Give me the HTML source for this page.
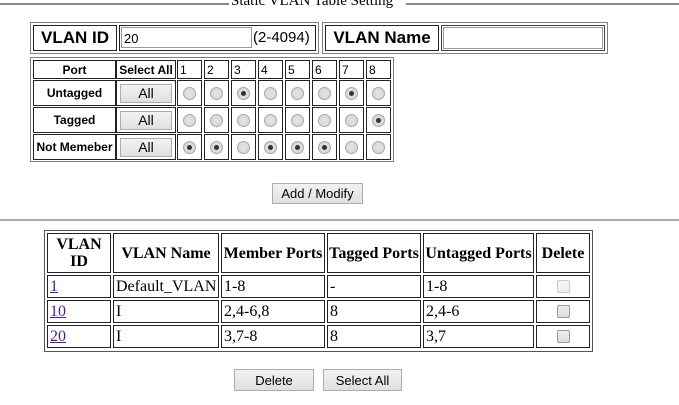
<!DOCTYPE html>
<html><head><meta charset="utf-8"><style>
body{margin:0;width:679px;height:405px;background:#fff;position:relative;overflow:hidden;font-family:"Liberation Sans",sans-serif;}
.a{position:absolute;box-sizing:border-box;}
.o{border:1px solid #808080;}
.c{border:1px solid #222;display:flex;align-items:center;justify-content:center;font-size:12px;}
.l{justify-content:flex-start;padding-left:2px;}
.b{font-weight:bold;}
.r{width:13px;height:13px;border-radius:50%;border:1px solid #a8a8a8;background:radial-gradient(circle,#e4e4e4,#d4d4d4);box-sizing:border-box;position:relative;}
.r.on::after{content:"";position:absolute;left:3px;top:3px;width:5px;height:5px;border-radius:50%;background:#333;}
.btn{border:1px solid #adadad;background:linear-gradient(#f2f2f2,#e0e0e0);display:flex;align-items:center;justify-content:center;font-size:13px;color:#000;}
.s{font-family:"Liberation Serif",serif;font-size:15px;}
.cb{width:13px;height:13px;border:1px solid #999;border-radius:2px;background:linear-gradient(#eee,#ddd);box-sizing:border-box;}
a{color:#551a8b;}
</style></head><body>
<div class="a" style="left:0;top:3px;width:229px;height:0;border-top:2px solid #888"></div>
<div class="a s" style="left:231px;top:-6px;font-size:15px;white-space:nowrap;line-height:15px">Static VLAN Table Setting</div>
<div class="a" style="left:406px;top:3px;width:273px;height:0;border-top:2px solid #888"></div>

<div class="a o" style="left:30px;top:22px;width:289px;height:32px"></div>
<div class="a c b" style="left:33px;top:25px;width:84px;height:26px;font-size:17px">VLAN ID</div>
<div class="a c" style="left:119px;top:25px;width:197px;height:26px;justify-content:flex-start"></div>
<div class="a" style="left:121px;top:27px;width:131px;height:21px;border:1px solid #999;font-size:13px;padding:3px 0 0 2px;box-sizing:border-box">20</div>
<div class="a" style="left:253px;top:29px;font-size:15px">(2-4094)</div>

<div class="a o" style="left:322px;top:22px;width:286px;height:32px"></div>
<div class="a c b" style="left:325px;top:25px;width:114px;height:26px;font-size:17px">VLAN Name</div>
<div class="a c" style="left:441px;top:25px;width:164px;height:26px;border-color:#444"></div>
<div class="a" style="left:443px;top:27px;width:160px;height:22px;border:1px solid #999"></div>

<div class="a o" style="left:30px;top:57px;width:364px;height:105px"></div>
<div id="pt"></div>

<div class="a btn" style="left:272px;top:183px;width:91px;height:21px">Add / Modify</div>
<div class="a" style="left:0;top:219px;width:679px;height:0;border-top:2px solid #aaa"></div>

<div class="a o" style="left:44px;top:230px;width:549px;height:122px;border-color:#555"></div>
<div id="bt"></div>

<div class="a btn" style="left:234px;top:369px;width:80px;height:22px">Delete</div>
<div class="a btn" style="left:323px;top:369px;width:79px;height:22px">Select All</div>

<script>
var pt=document.getElementById('pt'),h='';
var xs=[[33,83],[116,60],[177,25],[204,25],[231,25],[258,25],[285,25],[312,25],[339,25],[366,25]];
var ys=[[60,19],[80,26],[107,26],[134,26]];
var rows=['Untagged','Tagged','Not Memeber'];
var on=[[3,7],[8],[1,2,4,5,6]];
ys.forEach(function(y,ri){xs.forEach(function(x,ci){
 var inner='',cls='a c';
 if(ri==0){ if(ci==0){inner='Port';cls+=' b';}else if(ci==1){inner='Select All';cls+=' b';}else{inner=''+(ci-1);cls+=' l';}}
 else{ if(ci==0){inner=rows[ri-1];cls+=' b';}
  else if(ci==1)inner='<div class="btn" style="width:52px;height:19px;box-sizing:border-box;font-size:14px">All</div>';
  else inner='<div class="r'+(on[ri-1].indexOf(ci-1)>=0?' on':'')+'"></div>';}
 h+='<div class="'+cls+'" style="left:'+x[0]+'px;top:'+y[0]+'px;width:'+x[1]+'px;height:'+y[1]+'px">'+inner+'</div>';
});});
pt.outerHTML=h;
var bt=document.getElementById('bt');h='';
var bx=[[47,64],[113,106],[221,104],[327,94],[423,111],[536,54]];
var by=[[233,40],[275,23],[300,23],[325,23]];
var d=[['VLAN<br>ID','VLAN Name','Member Ports','Tagged Ports','Untagged Ports','Delete'],
['<a href="#">1</a>','Default_VLAN','1-8','-','1-8',''],
['<a href="#">10</a>','I','2,4-6,8','8','2,4-6',''],
['<a href="#">20</a>','I','3,7-8','8','3,7','']];
by.forEach(function(y,ri){bx.forEach(function(x,ci){
 var inner=d[ri][ci],cls='a c s',fs=16;
 if(ri==0){cls+=' b';inner='<span style="text-align:center;line-height:17px">'+inner+'</span>';}
 else if(ci==5){inner='<div class="cb" style="'+(ri==1?'opacity:.5':'')+'"></div>';}
 else cls+=' l';
 h+='<div class="'+cls+'" style="left:'+x[0]+'px;top:'+y[0]+'px;width:'+x[1]+'px;height:'+y[1]+'px;font-size:'+fs+'px;white-space:nowrap">'+inner+'</div>';
});});
bt.outerHTML=h;
</script>
</body></html>
